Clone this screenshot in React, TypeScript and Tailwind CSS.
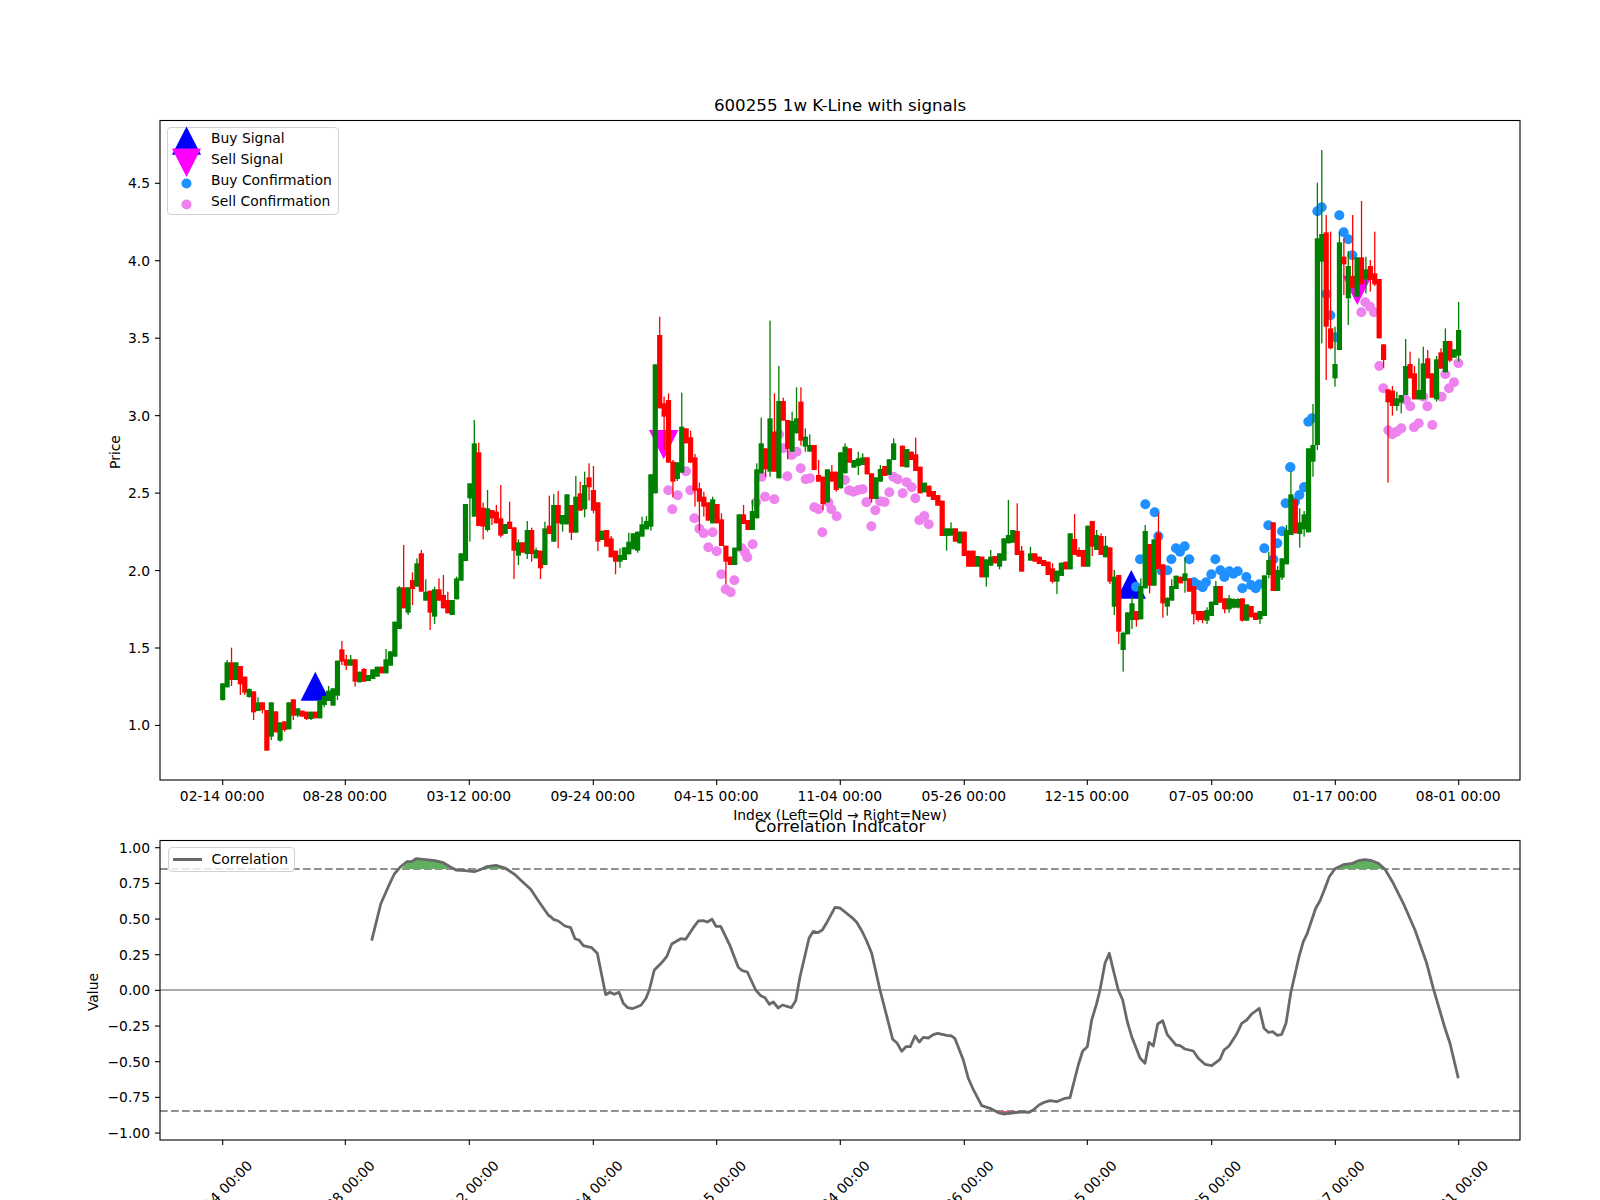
type Bar = [number, "g" | "r", number, number, number?, number?];
type Pt = [number, number];

// traced from the chart, in crop coordinates (crop px = 3 * page px)
const barsA: Bar[] = [
  [66, "g", 610, 660, 610, 662], [78, "g", 547, 622, 540], [92, "r", 547, 600, 503, 618], [105, "g", 547, 600],
  [117, "r", 558, 613, 558, 645], [132, "r", 590, 638, 590, 645], [145, "g", 627, 651, 625, 653], [158, "r", 634, 697, 634, 720],
  [171, "g", 667, 693, 652], [185, "r", 667, 690, 667, 700], [198, "r", 690, 812], [210, "g", 667, 770, 667, 780],
  [224, "r", 694, 757], [236, "g", 727, 782, 727, 785], [250, "r", 724, 750, 724, 755], [263, "g", 667, 748],
  [276, "r", 658, 707, 658, 720], [290, "g", 685, 707, 685, 712], [303, "r", 692, 710], [316, "r", 695, 717, 695, 720],
  [329, "g", 695, 717, 695, 720], [342, "r", 695, 715], [356, "g", 660, 715], [369, "g", 648, 675, 648, 682],
  [382, "g", 632, 663, 618], [396, "g", 625, 677], [410, "g", 542, 647, 542, 660], [423, "r", 508, 545, 483, 555],
  [436, "r", 538, 557, 525, 570], [449, "g", 538, 557, 525], [462, "r", 538, 605, 538, 620], [475, "g", 575, 607],
  [488, "r", 567, 605, 564], [503, "g", 585, 603], [515, "g", 568, 597], [527, "g", 560, 590], [540, "r", 560, 580],
  [554, "g", 538, 580, 507], [568, "g", 514, 557], [581, "g", 425, 530], [593, "g", 322, 447, 318],
  [606, "r", 322, 385, 195], [620, "g", 322, 398, 322, 405], [635, "r", 300, 327, 277, 375], [647, "g", 250, 320, 235],
  [662, "r", 220, 335, 210], [674, "g", 335, 362, 298], [687, "r", 332, 398, 332, 450], [702, "g", 328, 410, 320, 432],
  [715, "r", 328, 362, 295], [728, "r", 345, 385, 285], [741, "r", 360, 400, 335], [753, "g", 360, 405],
  [768, "g", 295, 358, 290], [781, "g", 220, 302], [795, "g", 72, 243], [807, "g", 10, 55, 10, 185],
  [820, "g", -110, 110, -180], [833, "r", -83, 138, -112], [846, "r", 83, 140, 68, 178], [860, "g", 85, 150, 30, 155],
  [873, "r", 90, 115, 90, 135], [888, "r", 95, 130, 75], [901, "r", 115, 167, 15, 172], [912, "g", 132, 162],
  [927, "r", 125, 147, 65], [940, "r", 142, 212, 142, 297], [953, "g", 187, 227, 178, 255], [965, "r", 187, 218],
  [977, "g", 150, 222, 123, 237], [992, "r", 150, 222, 143, 245], [1005, "g", 210, 235, 203], [1019, "r", 212, 265, 212, 297],
  [1032, "g", 145, 255, 125], [1045, "r", 137, 162, 47], [1059, "g", 75, 185, 42], [1072, "r", 75, 130, 33, 205],
  [1085, "g", 105, 133, 105, 155], [1098, "g", 43, 133], [1110, "r", 75, 158, 75, 180], [1124, "g", 50, 158, -12],
  [1137, "r", 40, 92, 5], [1152, "g", 15, 88, -25, 112], [1164, "r", -8, 22, -50, 62], [1178, "r", 30, 92, -42, 100],
  [1191, "r", 67, 185, 67, 213], [1205, "g", 152, 180], [1218, "r", 150, 200], [1232, "r", 175, 232, 168],
  [1245, "r", 212, 245, 212, 283], [1258, "g", 225, 245, 205, 263], [1271, "g", 202, 240], [1285, "g", 185, 223, 158],
  [1297, "g", 160, 208], [1311, "g", 155, 212, 155, 218], [1324, "g", 133, 170, 110], [1338, "g", 123, 148, 108],
];

const barsB: Bar[] = [
  [59, "g", 523, 680, 523, 692], [73, "g", 193, 580], [87, "r", 105, 325, 50], [98, "r", 310, 350, 290, 450],
  [112, "r", 300, 488, 280], [125, "r", 485, 545, 480, 592], [140, "g", 487, 537, 487, 543], [153, "g", 380, 518, 278],
  [165, "r", 385, 430], [179, "r", 412, 488, 392], [192, "r", 472, 572, 462, 620], [207, "r", 565, 605, 548, 692],
  [220, "r", 590, 620, 575, 650], [232, "r", 607, 662], [245, "g", 598, 670, 590], [258, "r", 612, 670],
  [273, "r", 658, 738, 640], [286, "r", 737, 785, 737, 853], [298, "r", 770, 795], [311, "g", 743, 795],
  [324, "g", 643, 752, 643, 752], [338, "r", 643, 672, 615], [351, "r", 660, 690], [365, "g", 633, 690, 600],
  [378, "g", 508, 655, 490], [392, "g", 430, 520, 353], [403, "r", 445, 508, 445, 530], [417, "g", 355, 515, 62, 530],
  [430, "r", 395, 515, 280], [444, "g", 303, 535, 198], [458, "r", 303, 362, 293], [471, "r", 360, 447, 360, 478],
  [484, "g", 363, 455, 335], [497, "g", 355, 400, 262], [510, "r", 305, 422, 262, 437], [525, "g", 410, 440, 385, 455],
  [537, "g", 435, 455, 403], [551, "r", 435, 510], [565, "r", 525, 545, 480], [576, "r", 530, 612, 530, 630],
  [590, "g", 508, 607], [603, "r", 515, 545, 495], [617, "r", 515, 570, 515, 575], [630, "g", 457, 565],
  [642, "g", 440, 520, 430], [656, "r", 445, 488], [668, "g", 480, 503], [682, "g", 475, 498, 455, 525],
  [695, "g", 472, 495, 460], [708, "r", 472, 523], [722, "r", 520, 597, 520, 608], [735, "g", 532, 597],
  [749, "g", 507, 545, 495], [761, "r", 498, 528], [775, "g", 478, 525], [789, "g", 430, 480, 415],
  [815, "r", 437, 500], [828, "g", 447, 502], [842, "r", 455, 480], [855, "r", 463, 513, 413], [868, "r", 500, 580],
  [882, "g", 548, 577], [895, "r", 557, 590], [908, "r", 573, 600], [922, "r", 585, 617], [935, "r", 602, 708],
  [948, "g", 685, 708, 685, 752], [961, "g", 685, 707, 667], [975, "r", 685, 725], [988, "g", 695, 730],
  [1001, "r", 695, 768], [1015, "r", 752, 800], [1027, "r", 752, 800], [1040, "g", 768, 800], [1053, "r", 770, 832],
  [1068, "g", 778, 832, 778, 860], [1081, "g", 770, 797, 750], [1093, "r", 768, 790], [1107, "g", 760, 800, 760, 808],
  [1120, "g", 715, 782], [1134, "g", 705, 730, 600], [1147, "g", 690, 728], [1160, "r", 693, 765, 610],
  [1173, "r", 752, 815, 738], [1200, "g", 760, 782, 740], [1213, "r", 760, 785], [1227, "r", 770, 792],
  [1240, "r", 780, 798], [1253, "r", 785, 825], [1266, "r", 805, 845, 790, 850], [1280, "g", 812, 845, 812, 882],
];

const barsC: Bar[] = [
  [4, "g", 338, 378], [14, "r", 335, 358], [29, "g", 250, 358], [43, "r", 267, 315, 192], [55, "r", 300, 320, 292],
  [68, "r", 300, 350], [80, "g", 227, 350], [95, "r", 213, 290, 213, 318], [108, "g", 255, 300, 240],
  [122, "r", 258, 315, 250], [135, "g", 287, 322, 258], [147, "r", 292, 395, 292, 402], [162, "g", 380, 470, 360, 495],
  [174, "r", 375, 545, 375, 582], [190, "g", 548, 600, 545, 665], [201, "g", 487, 553], [214, "g", 460, 510, 440, 537],
  [226, "r", 483, 510, 483, 530], [240, "g", 408, 508, 385], [254, "g", 243, 415, 225], [266, "r", 282, 407, 282, 430],
  [281, "g", 268, 407], [294, "r", 250, 357, 190], [307, "r", 343, 460, 343, 503], [321, "g", 443, 470, 443, 497],
  [333, "g", 408, 452, 388], [347, "g", 377, 417], [359, "r", 380, 400], [372, "g", 370, 393, 322, 428],
  [386, "r", 385, 425], [398, "r", 408, 493, 408, 523], [412, "r", 483, 510, 483, 515], [425, "r", 483, 510, 483, 520],
  [437, "g", 480, 512, 472, 522], [452, "g", 455, 498], [465, "g", 408, 465, 393], [480, "r", 408, 458],
  [492, "r", 445, 478, 445, 490], [505, "g", 445, 478, 435, 488], [519, "g", 447, 473, 445, 475], [532, "g", 447, 473, 445, 475],
  [545, "r", 445, 512, 445, 515], [558, "g", 463, 512], [572, "r", 468, 502], [585, "r", 488, 510], [597, "g", 483, 508, 483, 522],
  [612, "g", 376, 498], [625, "g", 330, 375, 305, 385], [638, "r", 217, 423], [652, "g", 360, 423, 348],
  [665, "g", 325, 383, 325, 390], [678, "g", 240, 343, 225], [690, "g", 133, 255, 65], [704, "r", 148, 250],
  [717, "g", 217, 252, 175, 293], [732, "g", 193, 238, 183, 260],
];

const barsD: Bar[] = [
  [172, "g", 955, 1207], [185, "g", 945, 995, 822, 1040], [200, "g", 325, 945, 158, 960], [213, "g", 312, 395, 60, 640],
  [228, "r", 307, 590, 255, 750], [240, "r", 595, 655, 305, 658], [256, "g", 702, 745, 590, 770], [267, "g", 337, 660, 305],
  [279, "r", 380, 403, 325, 495], [293, "g", 408, 505, 363, 585], [306, "r", 438, 473, 255, 473], [320, "g", 382, 500],
  [333, "r", 382, 463, 213], [345, "g", 418, 448, 380, 490], [360, "r", 408, 450, 390, 485], [373, "r", 430, 463, 305, 468],
  [387, "r", 447, 625], [399, "r", 643, 690, 643, 713], [415, "r", 778, 817, 778, 1058], [427, "r", 782, 828, 768, 857],
  [438, "g", 805, 828, 785, 842], [452, "g", 795, 818, 795, 850], [465, "g", 708, 795, 627], [480, "r", 702, 745, 665],
  [492, "r", 730, 808, 708], [505, "g", 780, 808, 685], [518, "g", 700, 808, 650], [531, "r", 685, 745, 660],
  [544, "r", 730, 803], [557, "g", 688, 808, 678, 815], [571, "r", 667, 716, 655], [584, "g", 633, 727, 595],
  [597, "r", 633, 692, 633, 697], [611, "g", 658, 683], [624, "g", 600, 677, 516, 695],
];

const sellB: Pt[] = [
  [115, 571], [143, 586], [127, 628], [168, 514], [181, 571], [193, 655], [208, 686], [221, 700], [248, 697], [235, 742],
  [260, 754], [274, 823], [287, 868], [302, 877], [313, 841], [335, 745], [345, 757], [352, 772], [368, 733], [378, 607],
  [405, 590], [433, 598], [395, 530], [447, 403], [460, 445], [485, 465], [500, 455], [472, 529], [512, 505], [527, 538],
  [540, 535], [553, 622], [566, 628], [595, 607], [604, 628], [620, 649], [577, 697], [645, 540], [657, 571], [670, 575],
  [685, 570], [698, 568], [709, 607], [736, 631], [724, 679], [750, 604], [764, 606], [778, 577], [790, 530], [803, 538],
  [818, 580], [830, 547], [845, 562], [856, 595], [868, 661], [883, 648], [896, 673],
];
const sellD: Pt[] = [
  [334, 547], [346, 517], [360, 530], [372, 547], [388, 708], [400, 775], [415, 901], [427, 913], [440, 905], [454, 895],
  [492, 892], [506, 880], [547, 885], [468, 810], [481, 829], [520, 800], [532, 829], [575, 800], [586, 733], [597, 775],
  [612, 757], [625, 700],
];
const buyC: Pt[] = [
  [256, 163], [284, 187], [295, 259], [240, 328], [228, 410], [305, 362], [322, 361], [334, 328], [348, 295], [360, 305],
  [374, 289], [388, 328], [402, 397], [415, 405], [428, 412], [438, 397], [454, 373], [466, 328], [481, 361], [493, 381],
  [508, 364], [520, 371], [533, 364], [547, 415], [559, 381], [573, 405], [587, 415], [598, 403], [613, 295], [625, 226],
  [640, 328], [652, 280], [666, 244], [677, 160], [691, 52], [705, 155], [718, 135], [732, 112],
];
const buyD: Pt[] = [
  [121, 1012], [163, 1072], [175, 875], [186, 865], [202, 244], [215, 232], [268, 256], [281, 307], [295, 328], [307, 376],
  [229, 492], [241, 556], [256, 622],
];

const corrA: Pt[] = [
  [935, 482], [962, 372], [985, 320], [1003, 282], [1020, 262], [1040, 245], [1055, 245], [1068, 236], [1090, 238], [1125, 242],
  [1150, 248], [1170, 260], [1188, 270], [1215, 272], [1243, 275], [1258, 270], [1280, 260], [1308, 256], [1335, 264], [1365, 284],
  [1385, 303], [1412, 328], [1440, 370], [1467, 408],
];
const corrB: Pt[] = [
  [0, 258], [10, 268], [25, 273], [45, 288], [62, 293], [75, 326], [88, 331], [100, 347], [125, 353], [142, 370], [167, 494],
  [180, 487], [193, 493], [207, 487], [220, 520], [233, 533], [247, 536], [273, 526], [288, 505], [298, 480], [313, 420], [335, 398],
  [350, 380], [365, 342], [392, 326], [407, 328], [430, 293], [445, 273], [460, 272], [472, 276], [486, 268], [498, 289], [512, 289],
  [540, 347], [565, 412], [577, 422], [592, 426], [617, 480], [632, 497], [645, 503], [658, 523], [670, 516], [685, 534], [697, 525],
  [724, 533], [737, 512], [750, 440], [777, 325], [790, 304], [803, 308], [817, 300], [832, 275], [855, 232], [870, 234], [905, 262],
  [920, 277], [935, 302], [950, 333], [965, 370], [990, 480], [1028, 628], [1042, 640], [1055, 664], [1068, 650], [1081, 650],
  [1095, 618], [1108, 636], [1120, 622], [1135, 624], [1150, 614], [1163, 610], [1190, 616], [1205, 618], [1215, 626], [1240, 690],
  [1255, 745], [1268, 775], [1295, 827], [1320, 835], [1347, 849], [1360, 852], [1385, 849], [1410, 846], [1425, 846], [1438, 847],
  [1450, 840], [1467, 825], [1480, 818],
];
const corrC: Pt[] = [
  [0, 812], [20, 815], [45, 805], [60, 803], [85, 705], [98, 663], [112, 650], [125, 570], [140, 520], [150, 480], [165, 400],
  [178, 370], [190, 420], [205, 480], [218, 510], [232, 575], [245, 620], [270, 684], [285, 700], [297, 637], [310, 648], [323, 582],
  [338, 572], [352, 614], [378, 645], [390, 647], [405, 657], [430, 663], [445, 685], [465, 703], [485, 707], [510, 688], [522, 660],
  [537, 648], [560, 612], [575, 580], [590, 570], [605, 552], [628, 535], [642, 595], [655, 607], [668, 605], [682, 616], [695, 613],
  [708, 580], [722, 490], [747, 380], [760, 335], [772, 310], [797, 235], [810, 212], [823, 180], [838, 140], [855, 116], [880, 104],
  [908, 100], [925, 92], [945, 89], [965, 92], [985, 100], [1005, 118], [1030, 160], [1060, 220], [1095, 300], [1130, 400], [1150, 475],
  [1185, 595], [1200, 640], [1225, 745],
];

const page = (ox: number, oy: number, pts: Pt[]): Pt[] => pts.map(([x, y]) => [ox + x / 3, oy + y / 3]);
const poly = (pts: Pt[]) => pts.map(([x, y]) => `${x.toFixed(1)},${y.toFixed(1)}`).join(" ");

const barX = (i: number) => 222.7 + i * 4.414;

function place(ox: number, oy: number, rows: Bar[]) {
  return rows.map(([X, c, top, bot, wt, wb]) => {
    const i = Math.round((ox + X / 3 - 222.7) / 4.414);
    return {
      i,
      color: c === "g" ? "#008000" : "#ff0000",
      top: oy + top / 3,
      bot: oy + bot / 3,
      wt: oy + (wt ?? top) / 3,
      wb: oy + (wb ?? bot) / 3,
    };
  });
}

const bars = [
  ...place(200, 480, barsA),
  ...place(630, 300, barsB),
  ...place(1060, 450, barsC),
  ...place(1250, 130, barsD),
];
const sellDots = [...page(630, 300, sellB), ...page(1250, 130, sellD)];
const buyDots = [...page(1060, 450, buyC), ...page(1250, 130, buyD)];
const corrLine = [...page(60, 780, corrA), ...page(550, 830, corrB), ...page(1050, 830, corrC)];

const dates = ["02-14", "08-28", "03-12", "09-24", "04-15", "11-04", "05-26", "12-15", "07-05", "01-17", "08-01"];
const tickXs = [222.7, 345.3, 469.3, 593.3, 716.7, 840.3, 964.3, 1087.3, 1211.7, 1335.3, 1458.7];
const priceTicks = ["4.5", "4.0", "3.5", "3.0", "2.5", "2.0", "1.5", "1.0"];
const valueTicks = ["1.00", "0.75", "0.50", "0.25", "0.00", "−0.25", "−0.50", "−0.75", "−1.00"];

const upTri = (x: number, apex: number, base: number) => `${x},${apex} ${x - 14.7},${base} ${x + 14.7},${base}`;
const downTri = (x: number, base: number, apex: number) => `${x - 14.7},${base} ${x + 14.7},${base} ${x},${apex}`;

function PriceChart() {
  return (
    <svg width={1600} height={690} viewBox="0 115 1600 690" className="block text-[13.89px]">
      <polygon points={upTri(315.3, 671.7, 700.7)} fill="#0000ff" />
      <polygon points={upTri(1131.3, 570, 598.7)} fill="#0000ff" />
      <polygon points={downTri(663.7, 430, 459.3)} fill="#ff00ff" />
      <polygon points={downTri(1357.3, 275.7, 305)} fill="#ff00ff" />
      {sellDots.map(([x, y], k) => (
        <circle key={k} cx={x} cy={y} r={5} fill="#ee82ee" />
      ))}
      {buyDots.map(([x, y], k) => (
        <circle key={k} cx={x} cy={y} r={5} fill="#1e90ff" />
      ))}
      {bars.map((b, k) => (
        <g key={k} fill={b.color}>
          <rect x={barX(b.i) - 0.65} y={b.wt} width={1.3} height={b.wb - b.wt} />
          <rect x={barX(b.i) - 2.6} y={b.top} width={5.2} height={b.bot - b.top} />
        </g>
      ))}
      <rect x={160} y={120.5} width={1360} height={659.5} fill="none" stroke="#000" strokeWidth={1.1} />
      {tickXs.map((x, k) => (
        <g key={k}>
          <line x1={x} x2={x} y1={780} y2={785} stroke="#000" strokeWidth={1.1} />
          <text x={x - 0.5} y={796} textAnchor="middle" dominantBaseline="central">
            {dates[k]} 00:00
          </text>
        </g>
      ))}
      {priceTicks.map((t, k) => {
        const y = 183.3 + k * 77.45;
        return (
          <g key={t}>
            <line x1={155} x2={160} y1={y} y2={y} stroke="#000" strokeWidth={1.1} />
            <text x={150} y={y} textAnchor="end" dominantBaseline="central">
              {t}
            </text>
          </g>
        );
      })}
      <text x={115} y={452} textAnchor="middle" dominantBaseline="central" transform="rotate(-90 115 452)">
        Price
      </text>
    </svg>
  );
}

function CorrelationChart() {
  return (
    <svg width={1600} height={364} viewBox="0 836 1600 364" className="block text-[13.89px]">
      <line x1={160} x2={1520} y1={990} y2={990} stroke="#aaaaaa" strokeWidth={2} />
      <line x1={160} x2={1520} y1={869} y2={869} stroke="#909090" strokeWidth={2.1} strokeDasharray="7.7 3.3" />
      <line x1={160} x2={1520} y1={1111} y2={1111} stroke="#909090" strokeWidth={2.1} strokeDasharray="7.7 3.3" />
      {/* zones au-dela des seuils */}
      <polygon
        points={poly(page(60, 780, [[1025, 267], [1040, 245], [1055, 245], [1068, 236], [1090, 238], [1125, 242], [1150, 248], [1172, 267]]))}
        fill="#5fb15f"
      />
      <polygon
        points={poly(page(60, 780, [[1270, 267], [1280, 260], [1308, 256], [1328, 267]]))}
        fill="#5fb15f"
      />
      <polygon
        points={poly(page(1050, 830, [[862, 117], [880, 104], [908, 100], [925, 92], [945, 89], [965, 92], [985, 100], [1002, 117]]))}
        fill="#5fb15f"
      />
      <polygon points={poly(page(550, 830, [[1340, 843], [1360, 852], [1410, 846], [1420, 843]]))} fill="#d9596b" />
      <polyline points={poly(corrLine)} fill="none" stroke="#696969" strokeWidth={2.8} strokeLinejoin="round" />
      <rect x={160} y={840.5} width={1360} height={299.5} fill="none" stroke="#000" strokeWidth={1.1} />
      {tickXs.map((x, k) => (
        <g key={k}>
          <line x1={x} x2={x} y1={1140} y2={1145} stroke="#000" strokeWidth={1.1} />
          <text
            x={x - 3}
            y={1193}
            textAnchor="middle"
            dominantBaseline="central"
            transform={`rotate(-45 ${x - 3} 1193)`}
          >
            {dates[k]} 00:00
          </text>
        </g>
      ))}
      {valueTicks.map((t, k) => {
        const y = 847.7 + k * 35.67;
        return (
          <g key={t}>
            <line x1={155} x2={160} y1={y} y2={y} stroke="#000" strokeWidth={1.1} />
            <text x={150} y={y} textAnchor="end" dominantBaseline="central">
              {t}
            </text>
          </g>
        );
      })}
      <text x={93} y={992} textAnchor="middle" dominantBaseline="central" transform="rotate(-90 93 992)">
        Value
      </text>
    </svg>
  );
}

function LegendMarker({ kind }: { kind: "up" | "down" | "buy" | "sell" }) {
  return (
    <svg width={29} height={21} viewBox="-14.5 -10.5 29 21" className="shrink-0 overflow-visible">
      {kind === "up" && <polygon points="0,-12 -14.5,16.3 14.5,16.3" fill="#0000ff" />}
      {kind === "down" && <polygon points="-14.5,-11 14.5,-11 0,17.5" fill="#ff00ff" />}
      {kind === "buy" && <circle cx={0} cy={3} r={5} fill="#1e90ff" />}
      {kind === "sell" && <circle cx={0} cy={3} r={5} fill="#ee82ee" />}
    </svg>
  );
}

const legendRows = [
  { kind: "up", label: "Buy Signal" },
  { kind: "down", label: "Sell Signal" },
  { kind: "buy", label: "Buy Confirmation" },
  { kind: "sell", label: "Sell Confirmation" },
] as const;

function SignalLegend() {
  return (
    <div className="absolute left-[167px] top-[32px] flex h-[88px] w-[172px] flex-col rounded border border-[#d2d2d2] bg-white/80 px-[4px] text-[13.89px] leading-[21px]">
      {legendRows.map((r) => (
        <div key={r.label} className="flex h-[21px] items-center gap-[10px]">
          <LegendMarker kind={r.kind} />
          <span className="whitespace-nowrap">{r.label}</span>
        </div>
      ))}
    </div>
  );
}

function CorrelationLegend() {
  return (
    <div className="absolute left-[167.5px] top-[31px] z-10 flex h-[25px] w-[127px] items-center gap-[10px] rounded border border-[#d2d2d2] bg-white/80 pl-[4px] text-[13.89px]">
      <span className="h-[3px] w-[29px] bg-[#696969]" />
      <span>Correlation</span>
    </div>
  );
}

export default function App() {
  return (
    <div className="h-[1200px] w-[1600px] overflow-hidden bg-white pt-[95px] font-['DejaVu_Sans',sans-serif] text-black">
      <section className="relative">
        <h2 className="h-5 pl-[160px] pr-[80px] pt-[1px] text-center text-[16.67px] font-normal leading-5">
          600255 1w K-Line with signals
        </h2>
        <PriceChart />
        <SignalLegend />
      </section>
      <p className="h-5 pl-[160px] pr-[80px] text-center text-[13.89px] leading-5">Index (Left=Old → Right=New)</p>
      <section className="relative -mt-[9px]">
        <h2 className="h-5 pl-[160px] pr-[80px] pt-[1px] text-center text-[16.67px] font-normal leading-5">
          Correlation Indicator
        </h2>
        <CorrelationLegend />
        <CorrelationChart />
      </section>
    </div>
  );
}
